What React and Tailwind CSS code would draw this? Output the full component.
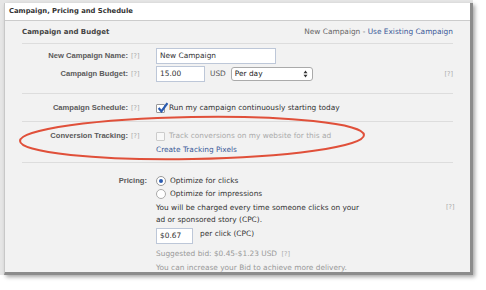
import React from "react";

const font = { fontFamily: '"DejaVu Sans", "Liberation Sans", sans-serif' };
const labelFont = { fontFamily: '"Liberation Sans", Arial, sans-serif' };

const Help = ({ className = "" }) => (
  <span className={`text-[6.5px] text-[#aaa] ${className}`}>[?]</span>
);

const Row = ({ label, children, right, help = true, className = "" }) => (
  <div className={`flex items-start ${className}`}>
    <div
      className={`${help ? "w-[109px]" : "w-[128px]"} text-right font-bold text-[#5a5a5a] text-[7.6px] pr-[3px] leading-[16px]`}
      style={labelFont}
    >
      {label}
    </div>
    <div className={`${help ? "w-[25px]" : "w-[6px]"} leading-[16px]`}>{help && <Help />}</div>
    <div className="flex-1">{children}</div>
    <div className="w-[10px] leading-[16px] text-right">{right}</div>
  </div>
);

const Input = ({ value, className = "" }) => (
  <div className={`h-[16px] bg-white border border-[#bdc7d8] px-[3px] leading-[14px] text-[#333] ${className}`}>
    {value}
  </div>
);

export default function App() {
  return (
    <div className="relative w-[486px] h-[290px] bg-white overflow-hidden text-[7.4px]" style={font}>
      <div className="w-[473px] h-[275px] border-t-[3px] border-l-[4px] border-[#e6e6e6]">
        <div className="w-[469px] h-[272px] bg-[#f2f2f2] border-l border-[#c8c8c8] border-r-[3px] border-b-[3px] border-r-[#8c8c8c] border-b-[#8c8c8c] shadow-[2px_2px_4px_rgba(0,0,0,0.35)]">
          <div className="h-[18px] bg-white border-b border-[#ccc] px-[4px] leading-[17px] font-bold text-[#333] text-[6.8px]">
            Campaign, Pricing and Schedule
          </div>
          <div className="px-[17px]">
            <div className="flex justify-between items-center h-[23px] border-b border-[#ddd]">
              <span className="font-bold text-[#444] text-[7px]">Campaign and Budget</span>
              <span className="text-[#666]">
                New Campaign - <span className="text-[#3b5998]">Use Existing Campaign</span>
              </span>
            </div>

            <div className="pt-[4px] pb-[11px] border-b border-[#ddd]">
              <Row label="New Campaign Name:">
                <Input value="New Campaign" className="w-[120px]" />
              </Row>
              <Row label="Campaign Budget:" right={<Help />} className="mt-[2px]">
                <div className="flex items-center gap-[5px]">
                  <Input value="15.00" className="w-[49px]" />
                  <span className="text-[#555]">USD</span>
                  <div className="w-[82px] h-[14px] bg-white border border-[#aaa] rounded-[3px] flex items-center justify-between pl-[3px] pr-[4px] text-[#222]">
                    <span>Per day</span>
                    <svg viewBox="0 0 6 10" className="w-[5px] h-[8px]">
                      <path d="M3 0.5 L5.5 4 H0.5 Z M3 9.5 L5.5 6 H0.5 Z" fill="#333" />
                    </svg>
                  </div>
                </div>
              </Row>
            </div>

            <div className="pt-[6px] pb-[5px] border-b border-[#ddd]">
              <Row label="Campaign Schedule:">
                <div className="flex items-center gap-[4px] h-[16px] text-[#333]">
                  <span className="relative w-[9px] h-[9px] bg-white border border-[#999] rounded-[1px]">
                    <svg viewBox="0 0 10 10" className="absolute left-[0px] top-[-3px] w-[11px] h-[11px]">
                      <path d="M1.5 5.5 L4 8.5 L9.5 1" fill="none" stroke="#2a5bb0" strokeWidth="2" />
                    </svg>
                  </span>
                  <span>Run my campaign continuously starting today</span>
                </div>
              </Row>
            </div>

            <div className="pt-[6px] pb-[7px] border-b border-[#ddd]">
              <Row label="Conversion Tracking:">
                <div className="flex items-center gap-[4px] h-[16px] text-[#aaa]">
                  <span className="w-[9px] h-[9px] bg-[#f8f8f8] border border-[#ccc] rounded-[1px]" />
                  <span>Track conversions on my website for this ad</span>
                </div>
                <div className="text-[#3b5998] leading-[11px]">Create Tracking Pixels</div>
              </Row>
            </div>

            <div className="pt-[10px]">
              <Row label="Pricing:" help={false}>
                <div className="text-[#333] leading-[12px] mt-[1px]">
                  <div className="flex items-center gap-[4px] h-[14px]">
                    <span className="w-[10px] h-[10px] rounded-full bg-white border border-[#999] flex items-center justify-center">
                      <span className="w-[4px] h-[4px] rounded-full bg-[#2a5bb0]" />
                    </span>
                    <span>Optimize for clicks</span>
                  </div>
                  <div className="flex items-center gap-[4px] h-[12px]">
                    <span className="w-[10px] h-[10px] rounded-full bg-white border border-[#aaa]" />
                    <span>Optimize for impressions</span>
                  </div>
                  <div className="mt-[2px]">
                    You will be charged every time someone clicks on your
                    <br />
                    ad or sponsored story (CPC).
                  </div>
                  <div className="flex items-start gap-[7px] mt-[2px]">
                    <Input value="$0.67" className="w-[37px]" />
                    <span className="leading-[12px]">per click (CPC)</span>
                  </div>
                  <div className="text-[#999] mt-[3px] leading-[13px]">
                    Suggested bid: $0.45-$1.23 USD <Help className="ml-[2px]" />
                  </div>
                  <div className="text-[#999] leading-[13px]">You can increase your Bid to achieve more delivery.</div>
                </div>
              </Row>
            </div>
          </div>
        </div>
      </div>

      <div className="absolute left-[446px] top-[201px]">
        <Help />
      </div>

      <svg className="absolute left-0 top-0 w-[486px] h-[290px] pointer-events-none" viewBox="0 0 486 290">
        <ellipse cx="192" cy="138" rx="172" ry="21" fill="none" stroke="#e0503a" strokeWidth="2" transform="rotate(-1 192 138)" />
      </svg>
    </div>
  );
}
